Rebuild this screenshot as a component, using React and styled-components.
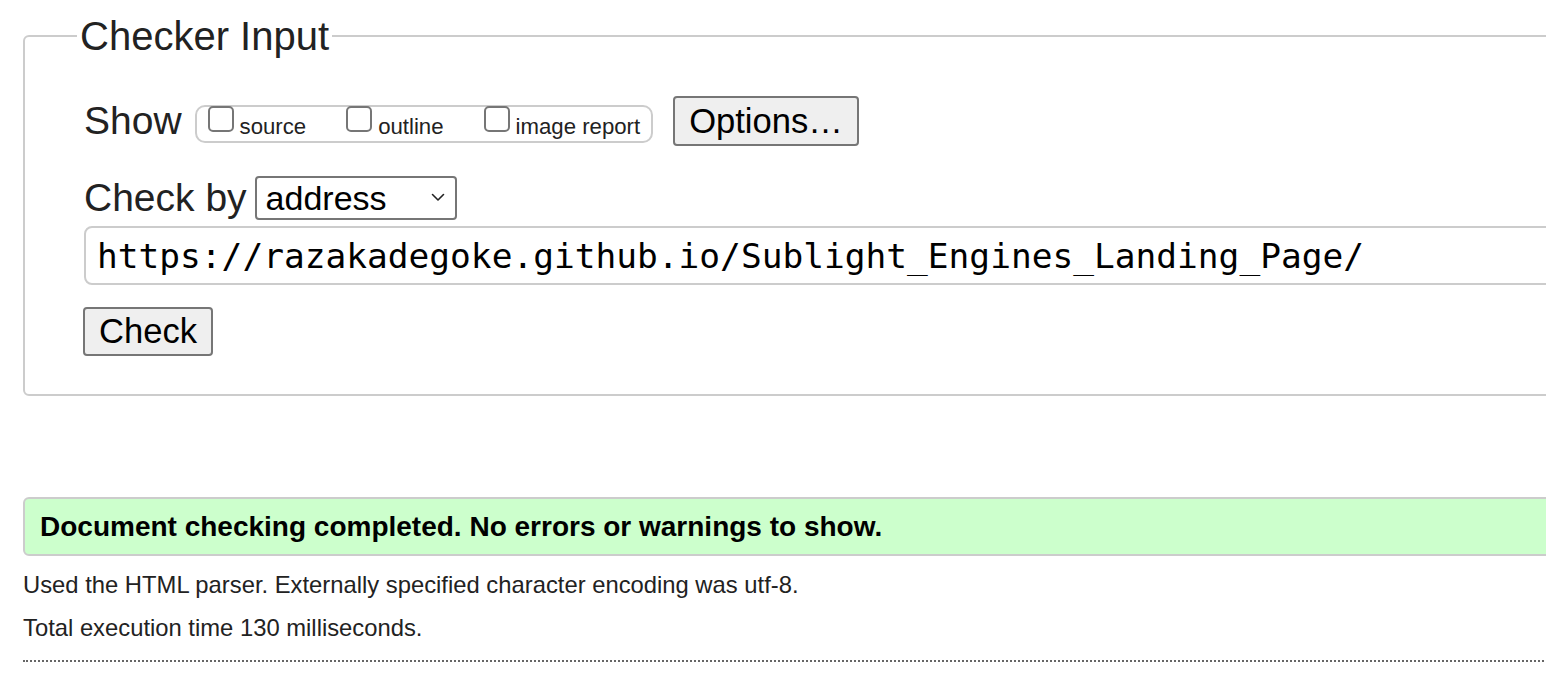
import React from 'react';
import styled, { createGlobalStyle } from 'styled-components';

const Global = createGlobalStyle`
  html, body { margin: 0; padding: 0; overflow: hidden; background: #fff; }
  body { font-family: "Liberation Sans", Arial, sans-serif; color: #222; }
`;

const Page = styled.div`
  width: 1620px;
  padding: 13px 0 0 23px;
`;

const Fieldset = styled.fieldset`
  margin: 0;
  min-width: 0;
  border: 2px solid #ccc;
  border-radius: 6px;
  padding: 0 30px 38px 59px;
`;

const Legend = styled.legend`
  font-size: 40px;
  line-height: 46px;
  padding: 0 3px;
  margin-left: -7px;
  color: #222;
`;

const Row = styled.div`
  display: flex;
  align-items: center;
  margin-top: ${p => p.$top}px;
`;

const Label = styled.span`
  font-size: 39px;
  line-height: 46px;
  margin-right: ${p => p.$gap}px;
  color: #222;
`;

const CheckGroup = styled.div`
  display: flex;
  align-items: flex-start;
  gap: 40px;
  height: 38px;
  box-sizing: border-box;
  border: 2px solid #ccc;
  border-radius: 10px;
  padding: 0 11px;
  margin-top: 6px;
`;

const CheckItem = styled.label`
  display: flex;
  align-items: flex-start;
`;

const Box = styled.input.attrs({ type: 'checkbox' })`
  appearance: none;
  -webkit-appearance: none;
  width: 26px;
  height: 26px;
  box-sizing: border-box;
  margin: -1px 6px 0 0;
  border: 2px solid #767676;
  border-radius: 5px;
  background: #fff;
`;

const CheckText = styled.span`
  font-size: 22.2px;
  line-height: 25px;
  margin-top: 7px;
  color: #222;
`;

const Button = styled.button`
  font-family: "Liberation Sans", Arial, sans-serif;
  font-size: 34.6px;
  height: ${p => p.$h}px;
  padding: 0 14px;
  margin-left: ${p => p.$left || 0}px;
  background: #efefef;
  border: 2px solid #767676;
  border-radius: 4px;
  color: #000;
  box-sizing: border-box;
`;

const SelectWrap = styled.span`
  position: relative;
  display: inline-flex;
`;

const Select = styled.select`
  appearance: none;
  -webkit-appearance: none;
  font-family: "Liberation Sans", Arial, sans-serif;
  font-size: 34px;
  width: 202px;
  height: 44px;
  box-sizing: border-box;
  padding: 0 40px 0 9px;
  border: 2px solid #767676;
  border-radius: 4px;
  background: #fff;
  color: #000;
`;

const Chevron = styled.svg`
  position: absolute;
  right: 12px;
  top: 17px;
  pointer-events: none;
`;

const UrlInput = styled.input`
  display: block;
  width: 100%;
  height: 59px;
  box-sizing: border-box;
  margin-top: 5px;
  padding: 0 11px;
  border: 2px solid #ccc;
  border-radius: 8px;
  font-family: "DejaVu Sans Mono", "Liberation Mono", monospace;
  font-size: 34.5px;
  color: #000;
  outline: none;
`;

const ButtonRow = styled.div`
  margin: 22px 0 0 -1px;
`;

const Success = styled.div`
  display: flex;
  align-items: center;
  margin-top: 101px;
  height: 59px;
  box-sizing: border-box;
  border: 2px solid #ccc;
  border-radius: 6px;
  background: #ccffcc;
  padding: 0 15px;
  font-size: 28px;
  font-weight: bold;
  color: #000;
`;

const Note = styled.p`
  margin: ${p => p.$top}px 0 0;
  font-size: 23.8px;
  line-height: 27px;
  color: #222;
`;

const Rule = styled.hr`
  margin: 19px 0 0;
  border: none;
  border-top: 2px dotted #666;
  height: 0;
`;

export default function App() {
  return (
    <>
      <Global />
      <Page>
        <Fieldset>
          <Legend>Checker Input</Legend>
          <Row $top={37}>
            <Label $gap={13}>Show</Label>
            <CheckGroup>
              <CheckItem><Box /><CheckText>source</CheckText></CheckItem>
              <CheckItem><Box /><CheckText>outline</CheckText></CheckItem>
              <CheckItem><Box /><CheckText>image report</CheckText></CheckItem>
            </CheckGroup>
            <Button $h={50} $left={20}>Options…</Button>
          </Row>
          <Row $top={29}>
            <Label $gap={8}>Check by</Label>
            <SelectWrap>
              <Select defaultValue="address">
                <option value="address">address</option>
                <option value="file">file upload</option>
                <option value="text">text input</option>
              </Select>
              <Chevron width="14" height="9" viewBox="0 0 14 9">
                <path d="M1.5 1.5 L7 7 L12.5 1.5" fill="none" stroke="#222" strokeWidth="1.6" strokeLinecap="round" strokeLinejoin="round" />
              </Chevron>
            </SelectWrap>
          </Row>
          <UrlInput readOnly value="https://razakadegoke.github.io/Sublight_Engines_Landing_Page/" />
          <ButtonRow>
            <Button $h={49}>Check</Button>
          </ButtonRow>
        </Fieldset>
        <Success>Document checking completed. No errors or warnings to show.</Success>
        <Note $top={15}>Used the HTML parser. Externally specified character encoding was utf-8.</Note>
        <Note $top={16}>Total execution time 130 milliseconds.</Note>
        <Rule />
      </Page>
    </>
  );
}
